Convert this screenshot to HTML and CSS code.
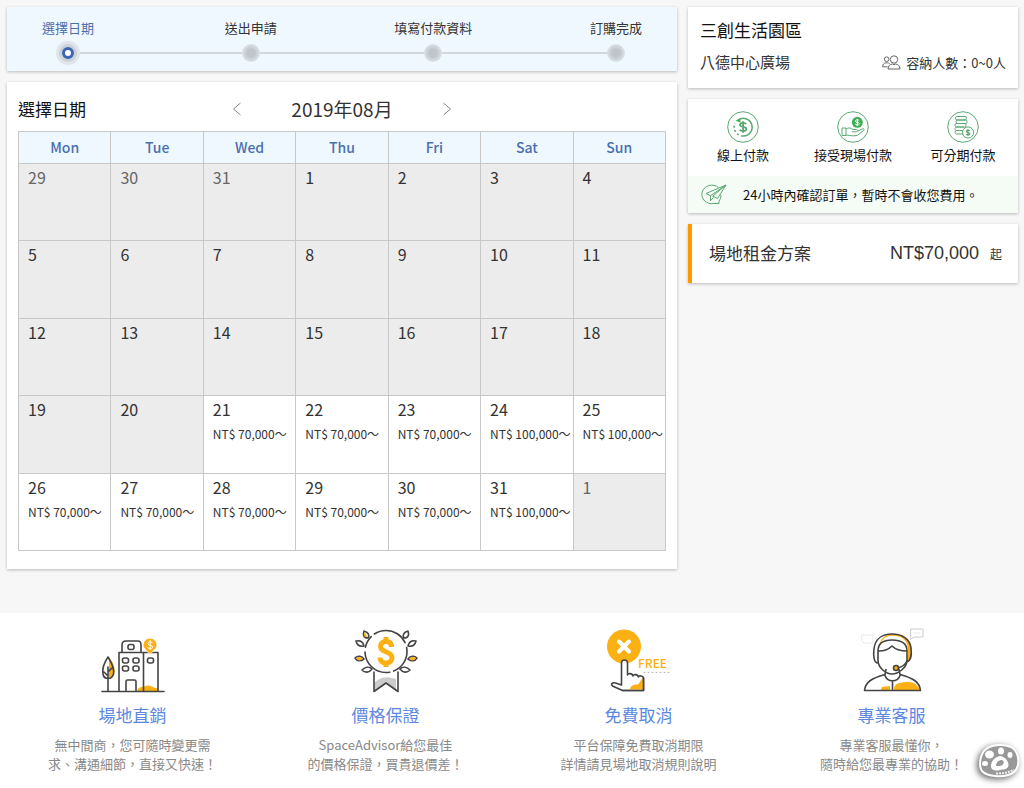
FILE: index.html
```html
<!DOCTYPE html>
<html lang="zh-Hant">
<head>
<meta charset="utf-8">
<meta name="viewport" content="width=device-width, initial-scale=1">
<title>選擇日期</title>
<link rel="stylesheet" href="styles.css">
</head>
<body>
<main class="layout">
  <div class="column">
    <ol class="card steps">
      <li class="step step-current" aria-current="step">選擇日期<span class="dot"></span></li>
      <li class="step">送出申請<span class="dot"></span></li>
      <li class="step">填寫付款資料<span class="dot"></span></li>
      <li class="step">訂購完成<span class="dot"></span></li>
    </ol>

    <section class="card booking">
      <header class="booking-head">
        <h2 class="heading">選擇日期</h2>
        <div class="month-nav">
          <button class="arrow" type="button" aria-label="上個月"><svg width="10" height="14" viewBox="0 0 10 14"><path d="M8.500 1 1.500 7l7 6"/></svg></button>
          <span class="month">2019年08月</span>
          <button class="arrow" type="button" aria-label="下個月"><svg width="10" height="14" viewBox="0 0 10 14"><path d="m1.500 1 7 6-7 6"/></svg></button>
        </div>
      </header>
      <table class="calendar">
        <thead>
          <tr><th scope="col">Mon</th><th scope="col">Tue</th><th scope="col">Wed</th><th scope="col">Thu</th><th scope="col">Fri</th><th scope="col">Sat</th><th scope="col">Sun</th></tr>
        </thead>
        <tbody>
          <tr><td class="other">29</td><td class="other">30</td><td class="other">31</td><td>1</td><td>2</td><td>3</td><td>4</td></tr>
          <tr><td>5</td><td>6</td><td>7</td><td>8</td><td>9</td><td>10</td><td>11</td></tr>
          <tr><td>12</td><td>13</td><td>14</td><td>15</td><td>16</td><td>17</td><td>18</td></tr>
          <tr>
            <td>19</td><td>20</td>
            <td class="open"><button class="day" type="button">21<span class="price">NT$ 70,000～</span></button></td>
            <td class="open"><button class="day" type="button">22<span class="price">NT$ 70,000～</span></button></td>
            <td class="open"><button class="day" type="button">23<span class="price">NT$ 70,000～</span></button></td>
            <td class="open"><button class="day" type="button">24<span class="price">NT$ 100,000～</span></button></td>
            <td class="open"><button class="day" type="button">25<span class="price">NT$ 100,000～</span></button></td>
          </tr>
          <tr>
            <td class="open"><button class="day" type="button">26<span class="price">NT$ 70,000～</span></button></td>
            <td class="open"><button class="day" type="button">27<span class="price">NT$ 70,000～</span></button></td>
            <td class="open"><button class="day" type="button">28<span class="price">NT$ 70,000～</span></button></td>
            <td class="open"><button class="day" type="button">29<span class="price">NT$ 70,000～</span></button></td>
            <td class="open"><button class="day" type="button">30<span class="price">NT$ 70,000～</span></button></td>
            <td class="open"><button class="day" type="button">31<span class="price">NT$ 100,000～</span></button></td>
            <td class="other">1</td>
          </tr>
        </tbody>
      </table>
    </section>
  </div>

  <aside class="column">
    <section class="card venue">
      <h1 class="heading">三創生活園區</h1>
      <div class="venue-row">
        <span class="hall">八德中心廣場</span>
        <span class="capacity">
          <svg class="people" width="19" height="15" viewBox="0 0 19 15"><circle cx="12" cy="4.500" r="3.700"/><circle cx="4.700" cy="4.200" r="2.300"/><path d="M6 14c0-3 1.800-4.700 4.500-5l1.500.8 1.500-.8c2.700.3 4.500 2 4.500 5zM.6 11.800c.1-2.500 1.400-3.800 3.400-4h1.400c.9.100 1.600.4 2.200.9M.6 11.800h4.800"/></svg>
          容納人數：0~0人
        </span>
      </div>
    </section>

    <section class="card payment">
      <ul class="methods">
        <li class="method">
          <svg class="green" width="32" height="32" viewBox="0 0 32 32"><circle cx="16" cy="16" r="15.300"/><path stroke-width="1.500" d="M11 9.200A8.800 8.800 0 1 1 16 25"/><path stroke-width="1.500" stroke-dasharray="2 2.400" d="M16 25A9 9 0 0 1 8 12"/><path class="solid" d="m8.500 9.800 4.800-2.600.2 4.400z"/><path stroke-width="1.800" d="M19.200 13.200c-.5-1-1.600-1.400-3.100-1.400-1.900 0-3.100.7-3.100 2 0 3.200 6.400 1.100 6.400 4.300 0 1.400-1.300 2.100-3.300 2.100-1.700 0-2.900-.5-3.400-1.600M16.100 10.200v11.600"/></svg>
          線上付款
        </li>
        <li class="method">
          <svg class="green" width="32" height="32" viewBox="0 0 32 32"><circle cx="16" cy="16" r="15.300"/><circle class="solid" cx="20.300" cy="11.300" r="5.500"/><path class="knock" d="M22.200 9.700c-.4-.6-1-.9-1.900-.9-1.200 0-1.900.5-1.900 1.300 0 2 3.900.7 3.900 2.600 0 .8-.8 1.300-2 1.300-1 0-1.700-.3-2.100-1M20.300 8v7"/><path d="M5 17h4v7.500H5zM9 18c2.500-1.700 5-1.200 7 .5h3.500c1.800 0 1.700 2.300 0 2.300H15M20.700 20l4.700-2.200c1.600-.5 2.300 1 .9 1.900l-5.600 4.500c-3.500 1.200-7 .4-11.700-.2"/></svg>
          接受現場付款
        </li>
        <li class="method">
          <svg class="green" width="32" height="32" viewBox="0 0 32 32"><circle cx="16" cy="16" r="15.300"/><rect x="8.500" y="5.500" width="11" height="3.500" rx="1.500"/><rect x="9" y="9" width="11" height="3.500" rx="1.500"/><rect x="8" y="12.500" width="11" height="3.500" rx="1.500"/><path d="M17 16H9.500c-2 0-2 3.500 0 3.500h6M15.500 19.500h-6c-2 0-2 3.500 0 3.500h7"/><circle cx="21" cy="21.500" r="5.600"/><path stroke-width="1.200" d="M22.800 19.900c-.3-.6-.9-.8-1.800-.8-1.100 0-1.700.4-1.700 1.200 0 1.900 3.600.7 3.600 2.500 0 .8-.7 1.200-1.800 1.200-1 0-1.600-.3-1.900-.9M21 18.200v6.700"/></svg>
          可分期付款
        </li>
      </ul>
      <p class="notice">
        <svg class="green" width="27" height="21" viewBox="0 0 27 21"><path d="M18.500 3.500A10 9.300 0 1 0 14 19.500h5V17c1.300-1.500 2-3.500 1.800-6M26 1 6 9.500l4.500 2.300L26 1l-8.500 13.500-4.800-2.300L26 1M10.500 11.800v5l2.800-3.200"/></svg>
        24小時內確認訂單，暫時不會收您費用。
      </p>
    </section>

    <section class="card plan">
      <h2 class="heading">場地租金方案</h2>
      <p class="rate"><span class="amount">NT$70,000</span>起</p>
    </section>
  </aside>
</main>

<footer class="services">
  <section class="service">
    <svg class="art" width="64" height="64" viewBox="0 0 64 64"><path class="fill" d="M36 62c2-5 6-4 9-5 5-2 7 3 12 2v3z"/><path class="fill" d="M8 28c4 5 7 12 5 17-1 3-3 5-5 4z"/><path d="M1 62.500h62M18 62V23.500h24.500V62M42.500 23.500H57V62M21 23v-7c0-3 1-4 4-4h12c2 0 3 1 3 4v7M25 62V52.500c0-1 .5-1.500 1.500-1.500h7c1 0 1.500.5 1.500 1.500V62M7 62V38M7 28C3 34 1 40 2 45c1 6 9 6 10.500 0C14 39 10 33 7 28zM7 47l-4-4m4 0 4-4"/><rect x="27" y="15.500" width="6" height="5" rx="2"/><rect x="21.500" y="29" width="6" height="5" rx="2"/><rect x="32" y="29" width="6" height="5" rx="2"/><rect x="21.500" y="37" width="6" height="5" rx="2"/><rect x="32" y="37" width="6" height="5" rx="2"/><rect x="46.500" y="29" width="6" height="5" rx="2"/><path class="fill halo" d="M49 26c-2-4-7-6-7-10a7 7 0 0 1 14 0c0 4-5 6-7 10z"/><path class="white-line" d="M51.500 14c-2-2.500-5-1-4.500 1 .7 2 4.600.8 4.600 3-.1 2-3.600 2.500-5 .3M49.200 11.500v9"/></svg>
    <h3 class="service-title">場地直銷</h3>
    <p class="service-text">無中間商，您可隨時變更需<br>求、溝通細節，直接又快速！</p>
  </section>
  <section class="service">
    <svg class="art" width="64" height="64" viewBox="0 0 64 64"><path class="shade" d="M20 54c6-4 8-8 22-4v12l-10-8-12 8z"/><path d="M20 43v19.500l12-8.500 12 8.500V43"/><circle class="paper" cx="32" cy="22.500" r="21" stroke-dasharray="25 4 36 5 12 4 36 5"/><path d="M14 9C9 9 9 5 10 2c4 1 6 4 4 7zM10 17c-5 1-7-1-8-5 4-1 7 1 8 5zM10 30c-4 3-7 2-9-1 3-3 7-2 9 1zM18 40c-3 4-7 4-10 1 3-3 7-4 10-1zM50 9c5 0 5-4 4-7-4 1-6 4-4 7zM54 17c5 1 7-1 8-5-4-1-7 1-8 5zM54 30c4 3 7 2 9-1-3-3-7-2-9 1zM46 40c3 4 7 4 10 1-3-3-7-4-10-1z"/><path class="fill" d="M11 3c-2 3-1 5 2 5zM2 29c3-2 5-1 7 1-3 2-5 2-7-1zM62 29c-3-2-5-1-7 1 3 2 5 2 7-1z"/><path class="gold-line" d="M37.500 18c0-3.500-2-5.500-5.500-5.500s-5.500 2-5.500 5c0 6.500 11.500 4.500 11.500 11 0 3.500-2.500 5.500-6 5.500s-6-2-6-5.500M32 8v5M32 34v4"/></svg>
    <h3 class="service-title">價格保證</h3>
    <p class="service-text">SpaceAdvisor給您最佳<br>的價格保證，買貴退價差！</p>
  </section>
  <section class="service">
    <svg class="art" width="64" height="64" viewBox="0 0 64 64"><circle class="fill" cx="17" cy="17.500" r="17"/><path class="cross" d="m12 12.500 10 10m0-10-10 10"/><path class="paper" d="M14.500 51V34c0-4 6-4 6 0v12c0-2 5-2 5.500 1 0-2 5-2 5.500 1 0-2 5-1 5 1v12.500H15.500L5.500 57c-2-2 0-4 3-3l6 2z"/><path class="fill" d="M36 49v11.500H23c0-3 3-5 7-5 3 0 3-5 6-6.500z"/><path d="M36.500 49v12.500H15.500"/><path class="dots" d="M37 43.500h26"/><text class="free" x="31" y="39">FREE</text></svg>
    <h3 class="service-title">免費取消</h3>
    <p class="service-text">平台保障免費取消期限<br>詳情請見場地取消規則說明</p>
  </section>
  <section class="service">
    <svg class="art" width="64" height="64" viewBox="0 0 64 64"><path class="fill" d="M19 20c2-10 7-14 16-13 8 0 14 6 13 17l-1 9c6-2 5-10 4-15C50 9 43 5 34 5c-9 0-15 5-15 15zM34 61c0-8 7-7 12-8 6 0 10 0 14 8zM22 58l8-1v4h-9z"/><path d="M4.500 61.500c1-8 6-12 20.500-16l1-5M60.500 61.500c-1-8-6-12-20.500-16l-1-5M4.500 61.500h56M25 46.500c2 7 13 7 15 0M32.500 53v8M18 21v10c0 8 8 14 14 14s15-6 15-14V21M19 22c6 0 10-2 13-5 3 3 9 5 15 5M18 34c-4 0-5-7-4-14C15 10 22 5 32 5s18 5 19 14c1 8-1 13-4 14M18 22c0-8 6-11 14-11 9 0 15 3 15 11M47 32c-2 4-5 6-9 7"/><circle class="mic" cx="36" cy="39" r="2.500"/><path class="bubble" d="M51 0h12v8h-9l-3 2z"/><path class="bubble faint" d="M2 6h11v8H4l-2-2zM54 4h6"/></svg>
    <h3 class="service-title">專業客服</h3>
    <p class="service-text">專業客服最懂你，<br>隨時給您最專業的協助！</p>
  </section>
</footer>

<svg class="paw" width="44" height="40" viewBox="0 0 44 40" aria-hidden="true"><path class="paw-base" d="M7 9C12 3 25 1 34 5c7 4 9 14 6 21-3 7-13 9-22 8C8 33 3 30 3 22c0-5 1-9 4-13z"/><ellipse cx="12.500" cy="12.500" rx="4.500" ry="4"/><ellipse cx="24" cy="9" rx="3" ry="3.500"/><ellipse cx="33" cy="13" rx="2.500" ry="3"/><ellipse cx="8" cy="21.500" rx="3" ry="2.500"/><path d="M14 24c0-5 4-9 9-10 6 1 10 7 8 11-2 3-5 2-8 3s-9 1-9-4z"/><path class="paw-mark" d="M19 24c0-4 3-6 6-6 4 2 1 7-6 6z"/><path class="paw-dots" d="M19 31.500c8 0 13-1 18-4"/></svg>
</body>
</html>
```

FILE: styles.css
```css
*, *::before { box-sizing: border-box; }

body {
  margin: 0;
  display: flex;
  flex-direction: column;
  min-height: 100vh;
  background: #f7f7f7;
  color: #333;
  font-family: "Noto Sans CJK TC", "Noto Sans", sans-serif;
  font-size: 13px;
  line-height: 19px;
}

h1, h2, h3, p, ol, ul { margin: 0; padding: 0; }
ol, ul { list-style: none; }
svg { display: block; fill: none; }

button {
  padding: 0;
  border: 0;
  background: none;
  color: inherit;
  font: inherit;
  cursor: pointer;
}

.layout {
  display: grid;
  grid-template-columns: 67fr 33fr;
  align-items: start;
  gap: 11px;
  padding: 7px 6px 44px 7px;
}

.column { display: grid; gap: 11px; min-width: 0; }

.card {
  background: #fff;
  box-shadow: 0 1px 3px rgba(0, 0, 0, .25);
}

.heading {
  color: #111;
  font-size: 17px;
  font-weight: 400;
  line-height: 24px;
}

/* Progress */
.steps {
  position: relative;
  display: flex;
  justify-content: space-between;
  padding: 11px 22px 6px;
  background: #f0f8ff;
}

.steps::before {
  content: "";
  position: absolute;
  top: 45px;
  left: 61px;
  right: 61px;
  height: 2px;
  background: #d3d8df;
}

.step {
  position: relative;
  display: flex;
  flex-direction: column;
  align-items: center;
  gap: 4px;
  width: 78px;
}

.step-current { color: #4a6fae; }

.dot {
  display: grid;
  place-items: center;
  width: 24px;
  height: 24px;
  border-radius: 50%;
}

.dot::before {
  content: "";
  width: 18px;
  height: 18px;
  border-radius: 50%;
  background: radial-gradient(circle, #bfc5cc 30%, #dde2e8 70%);
}

.step-current .dot { background: #dfe5ea; }

.step-current .dot::before {
  width: 12px;
  height: 12px;
  background: #fff;
  border: 3px solid #3c66b4;
  box-shadow: 0 0 0 3px #ccd2d9;
}

/* Calendar */
.booking { padding: 13px 11px 18px; }

.booking-head {
  display: grid;
  grid-template-columns: 1fr auto 1fr;
  align-items: center;
  padding-bottom: 8px;
}

.month-nav {
  display: flex;
  align-items: center;
  justify-content: space-between;
  width: 220px;
}

.month { font-size: 19px; line-height: 28px; }
.arrow svg { stroke: #888; stroke-width: 1; }

.calendar {
  width: 100%;
  height: 420px;
  table-layout: fixed;
  border-collapse: collapse;
}

.calendar th {
  height: 32px;
  padding: 0;
  border: 1px solid #c8c8c8;
  background: #f0f8ff;
  color: #4a6fae;
  font-size: 14px;
  font-weight: 500;
}

.calendar td {
  height: 77px;
  padding: 2px 0 0 9px;
  border: 1px solid #c8c8c8;
  background: #ececec;
  font-size: 16px;
  line-height: 22px;
  vertical-align: top;
}

.calendar .other { color: #666; }
.calendar .open { background: #fff; }

.day {
  display: block;
  width: 100%;
  text-align: left;
  white-space: nowrap;
}

.price {
  display: block;
  padding-top: 3px;
  font-size: 12px;
}

/* Venue */
.venue { padding: 11px 12px 15px; }

.venue-row {
  display: flex;
  align-items: center;
  justify-content: space-between;
  padding-top: 9px;
}

.hall { font-size: 15px; line-height: 22px; }
.capacity { display: flex; align-items: center; gap: 5px; }
.people { stroke: #666; stroke-width: 1; }

/* Payment */
.methods {
  display: grid;
  grid-template-columns: repeat(3, 1fr);
  padding: 12px 0;
  color: #111;
}

.method {
  display: flex;
  flex-direction: column;
  align-items: center;
  gap: 2px;
}

.green { stroke: #5ba872; stroke-width: 1; }
.green .solid { fill: #3fae55; stroke: none; }
.green .knock { stroke: #fff; stroke-width: 1; }

.notice {
  display: flex;
  align-items: center;
  gap: 16px;
  padding: 8px 12px;
  background: #f4fcf5;
  color: #111;
}

/* Rental plan */
.plan {
  display: flex;
  align-items: center;
  justify-content: space-between;
  padding: 17px 16px 18px 17px;
  border-left: 4px solid #f90;
}

.plan .heading { color: #333; }
.rate { display: flex; align-items: center; gap: 11px; font-size: 12px; }

.amount {
  font-family: "Liberation Sans", Arial, sans-serif;
  font-size: 18px;
  line-height: 24px;
}

/* Services */
.services {
  display: grid;
  flex: 1;
  grid-template-columns: repeat(4, 1fr);
  padding: 16px 6px 13px;
  background: #fff;
  text-align: center;
}

.service { display: flex; flex-direction: column; align-items: center; }
.service-title { padding-top: 10px; color: #5b87e0; font-size: 17px; font-weight: 400; line-height: 24px; }
.service-text { padding-top: 8px; color: #888; }

.art { stroke: #444; stroke-width: 1.6; stroke-linecap: round; stroke-linejoin: round; overflow: visible; }
.art .fill { fill: #fbb014; stroke: none; }
.art .shade { fill: #ccc; stroke: none; }
.art .paper { fill: #fff; }
.art .halo { stroke: #fff; stroke-width: 1; }
.art .white-line { stroke: #fff; stroke-width: 1; }
.art .gold-line { stroke: #fbb014; stroke-width: 5; stroke-linecap: butt; }
.art .cross { stroke: #fff; stroke-width: 4; }
.art .dots { stroke: #bbb; stroke-width: 1; stroke-dasharray: 1 3; }
.art .mic { fill: #fbb014; }
.art .bubble { stroke: #ccc; stroke-width: 1; }
.art .faint { stroke: #e8e8e8; }
.art .free { fill: #fbb014; stroke: none; font-size: 12px; font-weight: 500; }

.paw {
  position: fixed;
  right: 3px;
  bottom: 6px;
  fill: #fff;
  filter: drop-shadow(-2px 2px 3px rgba(0, 0, 0, .6));
}

.paw-base { fill: #999; stroke: #fff; stroke-width: 2; }
.paw .paw-mark { fill: #999; }
.paw-dots { fill: none; stroke: #eee; stroke-width: 2; stroke-dasharray: 2 1; }
```
